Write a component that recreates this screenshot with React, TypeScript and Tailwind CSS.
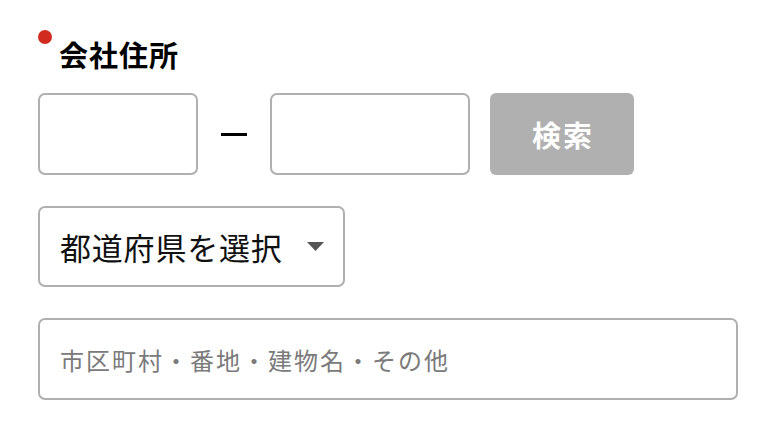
import React from "react";

export default function App() {
  const font = { fontFamily: '"Noto Sans CJK JP", "Noto Sans", sans-serif' };
  return (
    <div className="w-[776px] h-[432px] bg-white pl-[38px] pt-[30px]" style={font}>
      <div className="flex items-start">
        <span className="w-[14px] h-[14px] rounded-full bg-[#d12b1f] shrink-0" />
        <span className="ml-[7px] mt-[10px] text-[29px] leading-none font-bold text-black tracking-[1px]">
          会社住所
        </span>
      </div>

      <div className="mt-[24px] flex items-center h-[82px]">
        <input
          type="text"
          className="w-[160px] h-[82px] border-2 border-[#b0b0b0] rounded-[7px] bg-white outline-none"
        />
        <div className="mx-[23px] w-[26px] h-[3px] bg-black" />
        <input
          type="text"
          className="w-[200px] h-[82px] border-2 border-[#b0b0b0] rounded-[7px] bg-white outline-none"
        />
        <button
          type="button"
          className="ml-[20px] w-[144px] h-[82px] rounded-[6px] bg-[#b0b0b0] text-white text-[29px] font-bold leading-none tracking-[2px] pl-[2px]"
          style={font}
        >
          検索
        </button>
      </div>

      <button
        type="button"
        className="mt-[31px] w-[307px] h-[81px] border-2 border-[#b0b0b0] rounded-[7px] bg-white flex items-center justify-between pl-[20px] pr-[19px]"
        style={font}
      >
        <span className="text-[31px] leading-none text-[#111] tracking-[0.8px]">都道府県を選択</span>
        <svg width="17" height="9" viewBox="0 0 17 9">
          <path d="M0 0 L17 0 L8.5 9 Z" fill="#555" />
        </svg>
      </button>

      <input
        type="text"
        placeholder="市区町村・番地・建物名・その他"
        className="mt-[31px] block w-[700px] h-[82px] border-2 border-[#b0b0b0] rounded-[7px] bg-white outline-none pl-[20px] text-[24px] tracking-[2px] placeholder:text-[#7a7a7a]"
        style={font}
      />
    </div>
  );
}
